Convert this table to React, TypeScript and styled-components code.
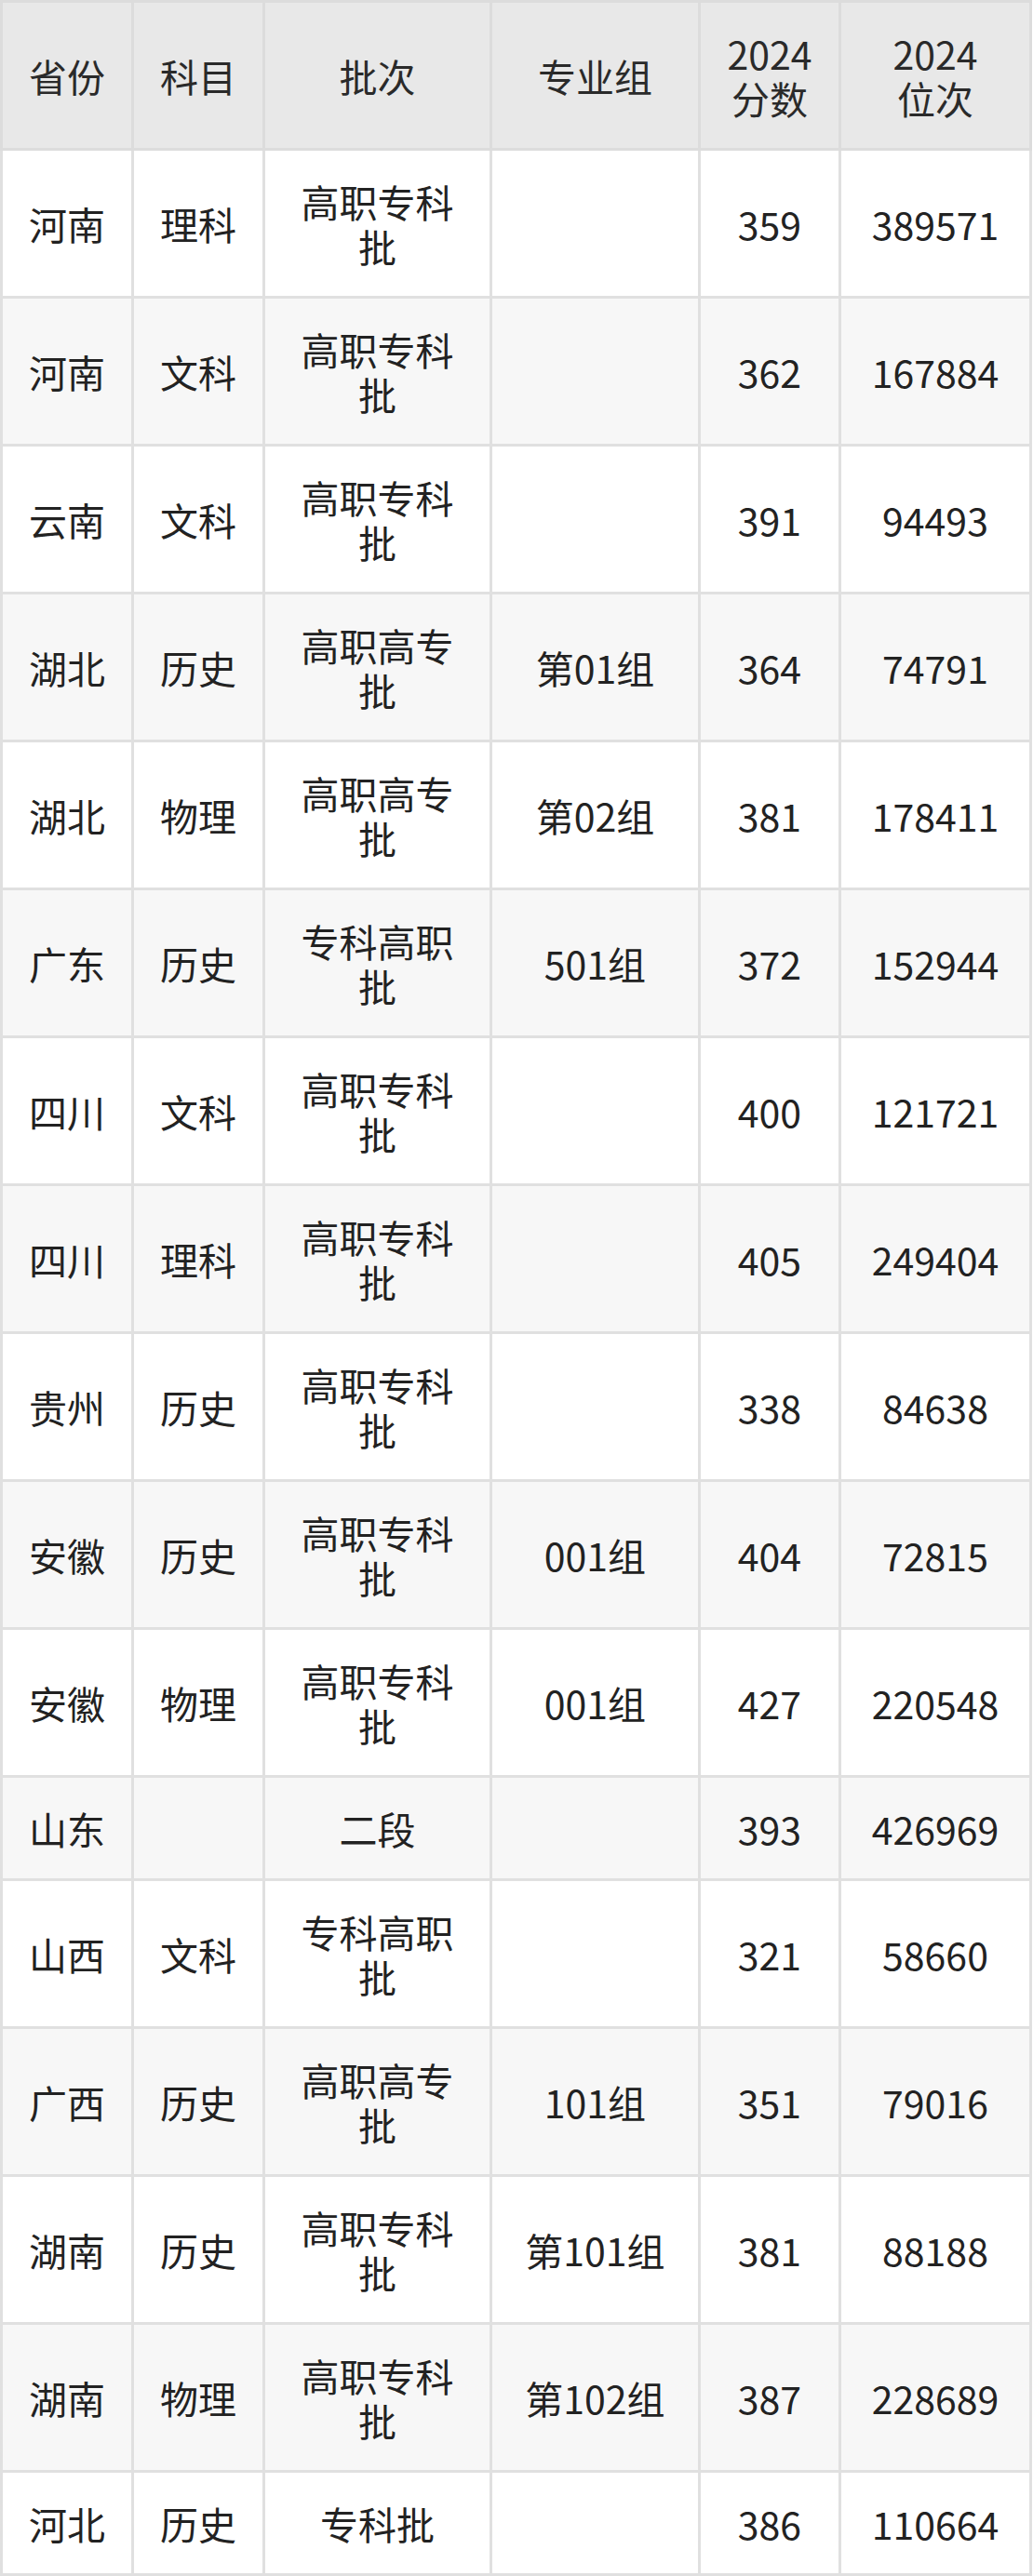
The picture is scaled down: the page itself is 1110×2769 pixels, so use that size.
import React from 'react'
import styled, { createGlobalStyle } from 'styled-components';

const GlobalStyle = createGlobalStyle`
    body {
        margin: 0;
        background-color: #FFFFFF;
    }
`;

interface ScoreRow {
    province: string;
    subject: string;
    batch: string;
    group: string;
    score: string;
    rank: string;
};

const rows: ScoreRow[] = [
    { province: '河南', subject: '理科', batch: '高职专科批', group: '', score: '359', rank: '389571' },
    { province: '河南', subject: '文科', batch: '高职专科批', group: '', score: '362', rank: '167884' },
    { province: '云南', subject: '文科', batch: '高职专科批', group: '', score: '391', rank: '94493' },
    { province: '湖北', subject: '历史', batch: '高职高专批', group: '第01组', score: '364', rank: '74791' },
    { province: '湖北', subject: '物理', batch: '高职高专批', group: '第02组', score: '381', rank: '178411' },
    { province: '广东', subject: '历史', batch: '专科高职批', group: '501组', score: '372', rank: '152944' },
    { province: '四川', subject: '文科', batch: '高职专科批', group: '', score: '400', rank: '121721' },
    { province: '四川', subject: '理科', batch: '高职专科批', group: '', score: '405', rank: '249404' },
    { province: '贵州', subject: '历史', batch: '高职专科批', group: '', score: '338', rank: '84638' },
    { province: '安徽', subject: '历史', batch: '高职专科批', group: '001组', score: '404', rank: '72815' },
    { province: '安徽', subject: '物理', batch: '高职专科批', group: '001组', score: '427', rank: '220548' },
    { province: '山东', subject: '', batch: '二段', group: '', score: '393', rank: '426969' },
    { province: '山西', subject: '文科', batch: '专科高职批', group: '', score: '321', rank: '58660' },
    { province: '广西', subject: '历史', batch: '高职高专批', group: '101组', score: '351', rank: '79016' },
    { province: '湖南', subject: '历史', batch: '高职专科批', group: '第101组', score: '381', rank: '88188' },
    { province: '湖南', subject: '物理', batch: '高职专科批', group: '第102组', score: '387', rank: '228689' },
    { province: '河北', subject: '历史', batch: '专科批', group: '', score: '386', rank: '110664' },
];

const colWidths = [141, 141, 244, 224, 151, 205];

const splitBatch = (text: string) => {
    // 4 chars per line, like the source table wraps
    if (text.length <= 4) return text;
    return (
        <>
            {text.slice(0, 4)}
            <br />
            {text.slice(4)}
        </>
    );
};

const App: React.FC = () => {
    return (
        <>
            <GlobalStyle />
            <Table>
                <colgroup>
                    {colWidths.map((w, i) => (
                        <col key={i} style={{ width: w }} />
                    ))}
                </colgroup>
                <thead>
                    <tr>
                        <HeadCell>省份</HeadCell>
                        <HeadCell>科目</HeadCell>
                        <HeadCell>批次</HeadCell>
                        <HeadCell>专业组</HeadCell>
                        <HeadCell>2024<br />分数</HeadCell>
                        <HeadCell>2024<br />位次</HeadCell>
                    </tr>
                </thead>
                <tbody>
                    {rows.map((item, index) => {
                        return (
                            <BodyRow key={index} $striped={index % 2 === 1}>
                                <Cell>{item.province}</Cell>
                                <Cell>{item.subject}</Cell>
                                <Cell>{splitBatch(item.batch)}</Cell>
                                <Cell>{item.group}</Cell>
                                <Cell>{item.score}</Cell>
                                <Cell>{item.rank}</Cell>
                            </BodyRow>
                        )
                    })}
                </tbody>
            </Table>
        </>
    )
};

const Table = styled.table`
    width: 1109px;
    border-collapse: collapse;
    table-layout: fixed;
    font-family: "Noto Sans CJK SC", "Noto Sans", sans-serif;
    font-size: 41px;
    line-height: 48px;
    color: #222222;
`;

const HeadCell = styled.th`
    background-color: #E8E8E8;
    border: 3px solid #DCDCDC;
    padding: 30px 0px;
    font-weight: 400;
    text-align: center;
    vertical-align: middle;
    color: #2A2A2A;
`;

const BodyRow = styled.tr<{ $striped: boolean }>`
    background-color: ${(props) => (props.$striped ? '#F7F7F7' : '#FFFFFF')};
`;

const Cell = styled.td`
    border: 3px solid #E0E0E0;
    padding: 30px 0px;
    text-align: center;
    vertical-align: middle;
    white-space: nowrap;
`;

export default App;
